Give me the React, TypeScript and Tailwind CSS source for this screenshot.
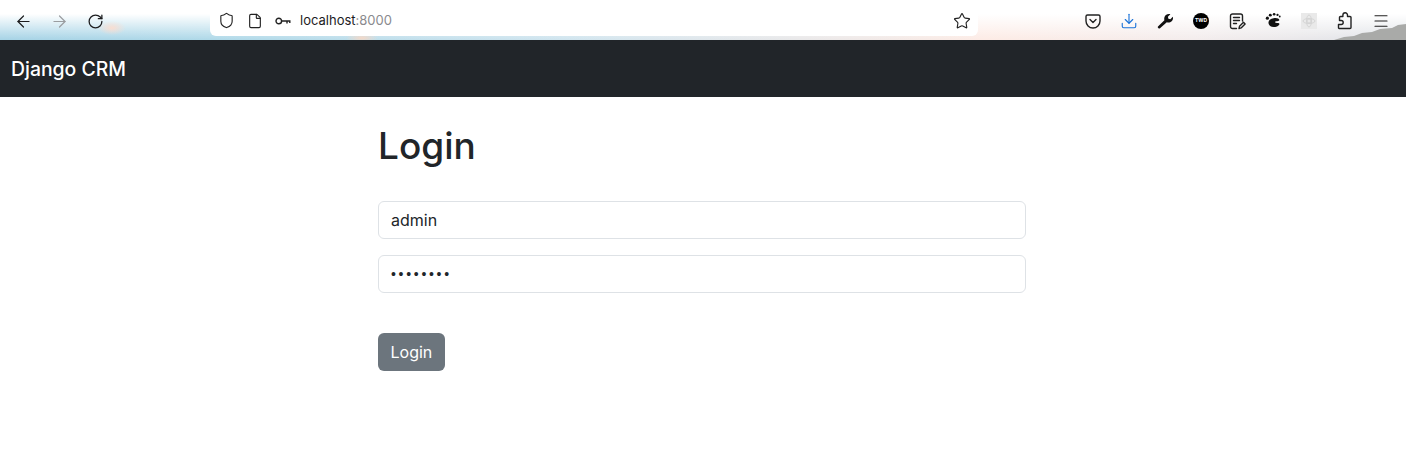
import { ArrowLeft, ArrowRight, RotateCw, Shield, File, Star, Download, Menu } from 'lucide-react';
import type { ReactNode } from 'react';

function KeyIcon() {
  return (
    <svg width="16" height="16" viewBox="0 0 16 16" fill="none" stroke="#222" strokeWidth="1.400">
      <circle cx="3.800" cy="8" r="2.800" />
      <path d="M6.600 8H15.500M12 8v2.600M14.800 8v2" />
    </svg>
  );
}

function PocketIcon() {
  return (
    <svg width="16" height="16" viewBox="0 0 16 16" fill="none" stroke="#222" strokeWidth="1.400" strokeLinecap="round" strokeLinejoin="round">
      <path d="M2.500 2h11A1.500 1.500 0 0 1 15 3.500V8a7 7 0 0 1-14 0V3.500A1.500 1.500 0 0 1 2.500 2z" />
      <path d="M5 6.500l3 3 3-3" />
    </svg>
  );
}

function WrenchIcon() {
  return (
    <svg width="16" height="16" viewBox="0 0 16 16" fill="#111">
      <path d="M1 13.600l6.400-6.300C6.900 5.400 7.400 3.400 8.900 2.100 10.300 1 12 .8 13.400 1.300L10.900 3.800l.5 2 2 .5 2.400-2.500c.5 1.600.1 3.300-1.100 4.500-1.300 1.200-3.200 1.600-4.900 1L3 15.200c-.4.400-1.100.4-1.500 0l-.5-.4c-.3-.3-.3-.9 0-1.200z" />
    </svg>
  );
}

function NotesIcon() {
  return (
    <svg width="17" height="17" viewBox="0 0 17 17" fill="none" stroke="#222" strokeWidth="1.400" strokeLinecap="round" strokeLinejoin="round">
      <path d="M7.500 15.500h-4a2 2 0 0 1-2-2V3a2 2 0 0 1 2-2h8a2 2 0 0 1 2 2v5" />
      <path d="M4.500 4.500h6M4.500 7.500h6M4.500 10.500h3" />
      <path d="M10 15.500l.5-2.200 4-4 1.600 1.600-4 4z" />
    </svg>
  );
}

function PawIcon() {
  return (
    <svg width="18" height="18" viewBox="0 0 16 16" fill="#111">
      <path d="M8.500 5.500c2.500-.6 5 .2 5.200 1.500.1 1-1.800 1-3 1.300-1 .3-1.200 1-.2 1.300 1.200.3 3-.2 3.200.9.200 1.500-2.500 3-5 2.800-3-.2-5-2-4.700-4.300.2-1.700 2-3 4.500-3.500z" />
      <circle cx="3" cy="5.500" r="1.400" />
      <circle cx="5.600" cy="2.800" r="1.300" />
      <circle cx="9" cy="2" r="1.200" />
      <circle cx="12" cy="2.600" r="1" />
      <circle cx="14" cy="4" r="0.800" />
    </svg>
  );
}

function GhostIcon() {
  return (
    <svg width="16" height="16" viewBox="0 0 16 16" fill="none" stroke="#cfcfcf" strokeWidth="0.800" className="bg-[#e9e9e9]">
      <circle cx="8" cy="8" r="2" />
      <ellipse cx="8" cy="8" rx="6" ry="2.500" />
      <ellipse cx="8" cy="8" rx="2.500" ry="6" />
    </svg>
  );
}

function PuzzleIcon() {
  return (
    <svg width="16" height="18" viewBox="0 0 16 18" fill="none" stroke="#222" strokeWidth="1.400" strokeLinejoin="round">
      <path d="M2 16.500h11a1 1 0 0 0 1-1V5.500a1 1 0 0 0-1-1h-2.500V3a2.300 2.300 0 0 0-4.600 0v1.500H3.500a1 1 0 0 0-1 1v3h1.700a2 2 0 0 1 0 4H1.500v3a1 1 0 0 0 .5 1z" />
    </svg>
  );
}

function ToolbarSlot({ children }: { children: ReactNode }) {
  return <div className="flex h-full w-9 items-center justify-center">{children}</div>;
}

export default function App() {
  return (
    <div className="min-h-[452px] bg-white font-['Inter',sans-serif] text-[#212529]">
      <div className="relative flex h-10 items-start overflow-hidden bg-[radial-gradient(ellipse_14px_7px_at_112px_28px,rgba(253,220,205,0.9),transparent),radial-gradient(ellipse_16px_5px_at_362px_38px,rgba(250,215,195,0.9),transparent),linear-gradient(to_bottom,#ffffff_0%,#ffffff_35%,rgba(255,255,255,0)_100%),linear-gradient(to_right,#a6d3e6_0%,#aed8e8_15%,#cfe4ee_40%,#fdebe5_70%,#f3ecec_85%,#dfe3e8_100%)]">
        <svg className="absolute right-0 top-[22px]" width="72" height="18" viewBox="0 0 72 18">
          <path d="M0 18 L10 15 L20 14 L28 11 L38 10 L46 7 L58 6 L64 3 L72 2 V18 Z" fill="#a9aaa8" />
        </svg>
        <div className="relative flex h-[42px] w-[210px] shrink-0 items-center pl-[5px] text-[#1c1c1e]">
          <ToolbarSlot><ArrowLeft size={19} strokeWidth={1.500} /></ToolbarSlot>
          <ToolbarSlot><ArrowRight size={19} strokeWidth={1.500} className="text-[#9a9da0]" /></ToolbarSlot>
          <ToolbarSlot><RotateCw size={17} strokeWidth={1.800} /></ToolbarSlot>
        </div>
        <div className="relative flex h-[36px] w-[768px] shrink-0 items-center rounded-b-[6px] bg-white pt-[5px] pr-[7px] pl-2">
          <Shield size={17} strokeWidth={1.600} className="text-[#222]" />
          <File size={16} strokeWidth={1.700} className="ml-[12px] text-[#222]" />
          <div className="ml-[12px]"><KeyIcon /></div>
          <span className="ml-[9px] text-[13px] text-[#1c1c1e]">
            localhost<span className="text-[#8a8a8e]">:8000</span>
          </span>
          <Star size={18} strokeWidth={1.500} className="ml-auto text-[#222]" />
        </div>
        <div className="relative ml-[97px] flex h-[42px] items-center">
          <ToolbarSlot><PocketIcon /></ToolbarSlot>
          <ToolbarSlot><Download size={18} strokeWidth={1.500} className="text-[#1a73d9]" /></ToolbarSlot>
          <ToolbarSlot><WrenchIcon /></ToolbarSlot>
          <ToolbarSlot>
            <div className="flex h-4 w-4 items-center justify-center rounded-full bg-black text-[5px] font-bold text-white">TWD</div>
          </ToolbarSlot>
          <ToolbarSlot><NotesIcon /></ToolbarSlot>
          <ToolbarSlot><PawIcon /></ToolbarSlot>
          <ToolbarSlot><GhostIcon /></ToolbarSlot>
          <ToolbarSlot><PuzzleIcon /></ToolbarSlot>
          <ToolbarSlot><Menu size={18} strokeWidth={1.500} className="text-[#222]" /></ToolbarSlot>
        </div>
      </div>

      <nav className="flex h-[57px] items-center bg-[#212529] pl-[11px]">
        <span className="pt-[2px] text-[19.400px] font-medium text-white">Django CRM</span>
      </nav>

      <main className="ml-[378px] w-[648px]">
        <h1 className="mt-[24px] text-[37px] leading-[50px] font-medium">Login</h1>
        <div className="mt-[30px] flex flex-col gap-4">
          <input
            readOnly
            value="admin"
            className="h-[38px] w-full rounded-[6px] border border-[#dee2e6] px-3 text-[16px] outline-none"
          />
          <input
            readOnly
            type="password"
            value="password"
            className="h-[38px] w-full rounded-[6px] border border-[#dee2e6] px-3 font-['Liberation_Sans',sans-serif] text-[14px] tracking-[2.700px] outline-none"
          />
        </div>
        <button className="mt-10 h-[38px] rounded-[6px] bg-[#6c757d] px-[12.500px] text-[16px] text-white">Login</button>
      </main>
    </div>
  );
}
